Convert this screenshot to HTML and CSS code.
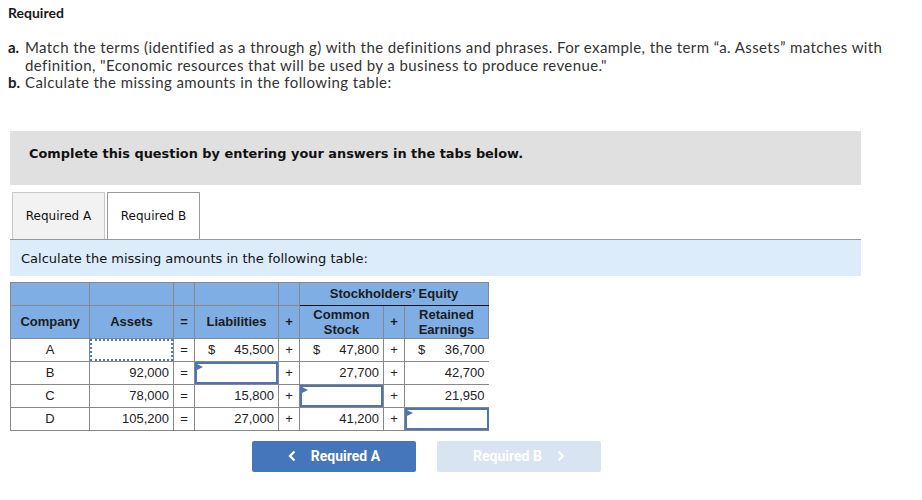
FILE: index.html
```html
<!DOCTYPE html>
<html>
<head>
<meta charset="utf-8">
<link rel="stylesheet" href="styles.css">
</head>
<body>
<div class="page">
  <div class="req-title">Required</div>
  <div class="parts">
    <div class="part"><span class="lbl">a.</span><span class="txt">Match the terms (identified as a through g) with the definitions and phrases. For example, the term “a. Assets” matches with definition, "Economic resources that will be used by a business to produce revenue."</span></div>
    <div class="part"><span class="lbl">b.</span><span class="txt">Calculate the missing amounts in the following table:</span></div>
  </div>
  <div class="notice">Complete this question by entering your answers in the tabs below.</div>
  <div class="tabs">
    <div class="tab tab-a">Required A</div>
    <div class="tab tab-b">Required B</div>
  </div>
  <div class="panel">Calculate the missing amounts in the following table:</div>
  <table class="grid">
    <colgroup>
      <col class="c-co"><col class="c-amt"><col class="c-op"><col class="c-amt"><col class="c-op2"><col class="c-cs"><col class="c-op"><col class="c-amt">
    </colgroup>
    <thead>
      <tr class="h1">
        <th></th><th></th><th></th><th></th><th></th>
        <th colspan="3" class="se">Stockholders’ Equity</th>
      </tr>
      <tr class="h2">
        <th>Company</th><th class="assets">Assets</th><th>=</th><th>Liabilities</th><th>+</th>
        <th class="two">Common<br>Stock</th><th>+</th><th class="two">Retained<br>Earnings</th>
      </tr>
    </thead>
    <tbody>
      <tr>
        <td class="co">A</td>
        <td class="inp"><div class="box dotted"></div></td>
        <td class="op">=</td>
        <td><div class="money"><span>$</span><span>45,500</span></div></td>
        <td class="op">+</td>
        <td><div class="money"><span>$</span><span>47,800</span></div></td>
        <td class="op">+</td>
        <td class="last"><div class="money"><span>$</span><span>36,700</span></div></td>
      </tr>
      <tr>
        <td class="co">B</td>
        <td class="num">92,000</td>
        <td class="op">=</td>
        <td class="inp"><div class="box solid"></div></td>
        <td class="op">+</td>
        <td class="num">27,700</td>
        <td class="op">+</td>
        <td class="num last">42,700</td>
      </tr>
      <tr>
        <td class="co">C</td>
        <td class="num">78,000</td>
        <td class="op">=</td>
        <td class="num">15,800</td>
        <td class="op">+</td>
        <td class="inp"><div class="box solid"></div></td>
        <td class="op">+</td>
        <td class="num last">21,950</td>
      </tr>
      <tr>
        <td class="co">D</td>
        <td class="num">105,200</td>
        <td class="op">=</td>
        <td class="num">27,000</td>
        <td class="op">+</td>
        <td class="num">41,200</td>
        <td class="op">+</td>
        <td class="inp last"><div class="box solid"></div></td>
      </tr>
    </tbody>
  </table>
  <div class="nav">
    <div class="btn btn-prev"><span class="chev">
      <svg width="8" height="12" viewBox="0 0 8 12"><path d="M6.5 1.5 L2 6 L6.5 10.5" fill="none" stroke="#fff" stroke-width="2.2"/></svg>
    </span><span>Required A</span></div>
    <div class="btn btn-next"><span>Required B</span><span class="chev">
      <svg width="8" height="12" viewBox="0 0 8 12"><path d="M1.5 1.5 L6 6 L1.5 10.5" fill="none" stroke="#fff" stroke-width="2.2"/></svg>
    </span></div>
  </div>
</div>
</body>
</html>
```
FILE: styles.css
```css
html, body {
  margin: 0;
  padding: 0;
  background: #fff;
}
.page {
  width: 922px;
  color: #222;
}
.req-title {
  font-family: Lato, "Open Sans", sans-serif;
  font-weight: bold;
  font-size: 14px;
  line-height: 17px;
  padding: 4px 0 0 8px;
  color: #1a1a1a;
}
.parts {
  margin-top: 18px;
  padding-left: 8px;
  font-family: Lato, "Open Sans", sans-serif;
  font-size: 15px;
  letter-spacing: 0.4px;
  line-height: 17.5px;
  color: #333;
}
.part {
  display: flex;
}
.lbl {
  width: 17px;
  flex: none;
  font-weight: bold;
  letter-spacing: 0;
  color: #1a1a1a;
}
.txt {
  width: 880px;
}
.notice {
  margin: 39px 0 0 10px;
  width: 832px;
  height: 39px;
  padding: 15px 0 0 19px;
  background: #e0e0e0;
  font-family: "DejaVu Sans", Verdana, sans-serif;
  font-weight: bold;
  font-size: 12.9px;
  line-height: 16px;
  color: #111;
}
.tabs {
  display: flex;
  gap: 2px;
  margin: 7px 0 0 12px;
}
.tab {
  box-sizing: border-box;
  height: 47px;
  display: flex;
  align-items: center;
  justify-content: center;
  font-family: "DejaVu Sans", Verdana, sans-serif;
  font-size: 12px;
  color: #111;
}
.tab-a {
  width: 93px;
  background: #f2f2f2;
  border: 1px solid #c8c8c8;
  border-bottom: none;
}
.tab-b {
  width: 93px;
  background: #fff;
  border: 1px solid #999;
  border-bottom: none;
}
.panel {
  margin-left: 10px;
  width: 840px;
  height: 36px;
  border-top: 1px solid #999;
  background: #dcecfa;
  padding-left: 11px;
  font-family: "DejaVu Sans", Verdana, sans-serif;
  font-size: 13px;
  line-height: 37px;
  color: #111;
}
.grid {
  margin: 6px 0 0 10px;
  border-collapse: collapse;
  table-layout: fixed;
  width: 479px;
  font-family: "Liberation Sans", Arial, sans-serif;
  font-size: 13px;
  color: #222;
}
.c-co { width: 79px; }
.c-amt { width: 84px; }
.c-op { width: 21px; }
.c-op2 { width: 21px; }
.c-cs { width: 84px; }
.grid th, .grid td {
  border: 1px solid #888;
  padding: 0;
  overflow: hidden;
}
.grid th {
  background: #7eaee4;
  font-weight: bold;
  color: #1b1b1b;
  text-align: center;
  vertical-align: middle;
}
.grid .h1 th {
  height: 22px;
}
.grid .h1 th.se {
  border-bottom: 1px solid #111;
}
.grid .h2 th {
  height: 32px;
}
.grid .h2 th.two {
  line-height: 15px;
}
.grid .h2 th.assets {
  vertical-align: top;
  padding-top: 8px;
  height: 24px;
}
.grid td {
  height: 22px;
  line-height: 22px;
}
.grid td.last {
  border-right: none;
}
.grid td.co, .grid td.op {
  text-align: center;
}
.grid td.num {
  text-align: right;
  padding-right: 4px;
}
.money {
  display: flex;
  justify-content: space-between;
  padding: 0 4px 0 13px;
}
.grid td.inp {
  position: relative;
}
.box {
  box-sizing: border-box;
  height: 22px;
  position: relative;
}
.box.dotted {
  border: 2px dotted #4a78be;
}
.box.solid {
  border: 2px solid #4f75ad;
}
.box.solid::before {
  content: "";
  position: absolute;
  left: 0;
  top: 0;
  border-top: 3px solid transparent;
  border-bottom: 3px solid transparent;
  border-left: 6px solid #4f75ad;
}
.nav {
  display: flex;
  gap: 21px;
  margin: 10px 0 0 252px;
}
.btn {
  width: 164px;
  height: 31px;
  border-radius: 2px;
  display: flex;
  align-items: center;
  justify-content: center;
  gap: 15px;
  font-family: Roboto, "Liberation Sans", sans-serif;
  font-weight: bold;
  font-size: 14px;
  color: #fff;
}
.btn-prev {
  background: #4575bb;
}
.btn-next {
  background: #d9e4f2;
}
.chev {
  display: flex;
  align-items: center;
}
```
